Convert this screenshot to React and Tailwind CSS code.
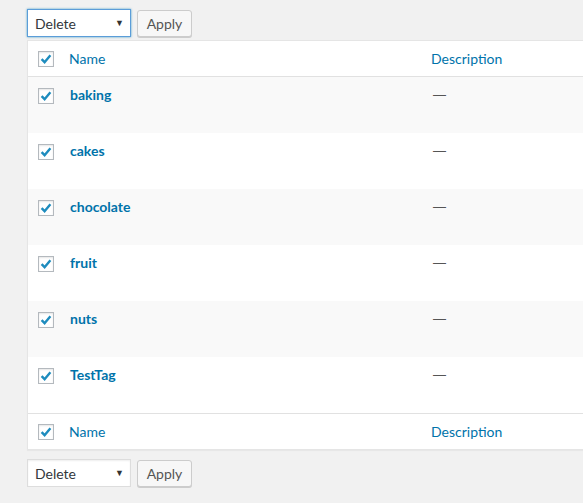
import React from "react";

const font = { fontFamily: "Lato, 'Noto Sans', sans-serif" };

function Check() {
  return (
    <span className="flex h-4 w-4 shrink-0 items-center justify-center border border-[#b4b9be] bg-white shadow-[inset_0_1px_2px_rgba(0,0,0,0.1)]">
      <svg width="14" height="14" viewBox="0 0 14 14">
        <path d="M2.6 7.2 L5.6 10.2 L11.4 3.2" fill="none" stroke="#1e8cbe" strokeWidth="2.4" strokeLinejoin="miter" />
      </svg>
    </span>
  );
}

function Nav({ focused }) {
  return (
    <div className="flex items-center gap-[6px]">
      <div
        className={`flex h-[28px] w-[104px] items-center justify-between bg-white pl-[7px] pr-[6px] text-[14px] text-[#32373c] ${
          focused ? "border border-[#5b9dd9] shadow-[0_0_2px_rgba(30,140,190,0.8)]" : "border border-[#ddd] shadow-[inset_0_1px_2px_rgba(0,0,0,0.07)]"
        }`}
      >
        <span>Delete</span>
        <span className="text-[9px] text-[#333]">▼</span>
      </div>
      <div className="flex h-[27px] w-[55px] items-center justify-center rounded-[3px] border border-[#ccc] bg-[#f7f7f7] text-[14px] text-[#555] shadow-[0_1px_0_#ccc]">
        Apply
      </div>
    </div>
  );
}

function HeadRow({ top }) {
  return (
    <div className={`flex h-[36px] items-center ${top ? "border-b border-[#e1e1e1]" : "border-t border-[#e1e1e1]"}`}>
      <div className="flex w-[41px] pl-[10px]">
        <Check />
      </div>
      <div className="w-[362px] text-[14px] text-[#0073aa]">Name</div>
      <div className="text-[14px] text-[#0073aa]">Description</div>
    </div>
  );
}

const rows = ["baking", "cakes", "chocolate", "fruit", "nuts", "TestTag"];

export default function App() {
  return (
    <div className="min-h-[503px] w-full overflow-hidden bg-[#f1f1f1] pl-[27px] pt-[9px]" style={font}>
      <Nav focused />
      <div className="mt-[3px] w-[620px] border border-[#e5e5e5] bg-white shadow-[0_1px_1px_rgba(0,0,0,0.04)]">
        <HeadRow top />
        {rows.map((r, i) => (
          <div key={r} className={`flex h-[56px] items-start pt-[11px] ${i % 2 === 0 ? "bg-[#f9f9f9]" : "bg-white"}`}>
            <div className="flex w-[42px] pl-[10px]">
              <Check />
            </div>
            <div className="w-[362px] -mt-[3px] text-[14px] font-bold leading-[20px] text-[#0073aa]">{r}</div>
            <div className="-mt-[3px] pl-[1px] font-['Liberation_Sans',sans-serif] text-[13px] leading-[20px] text-[#555]">—</div>
          </div>
        ))}
        <HeadRow />
      </div>
      <div className="mt-[9px]">
        <Nav />
      </div>
    </div>
  );
}
